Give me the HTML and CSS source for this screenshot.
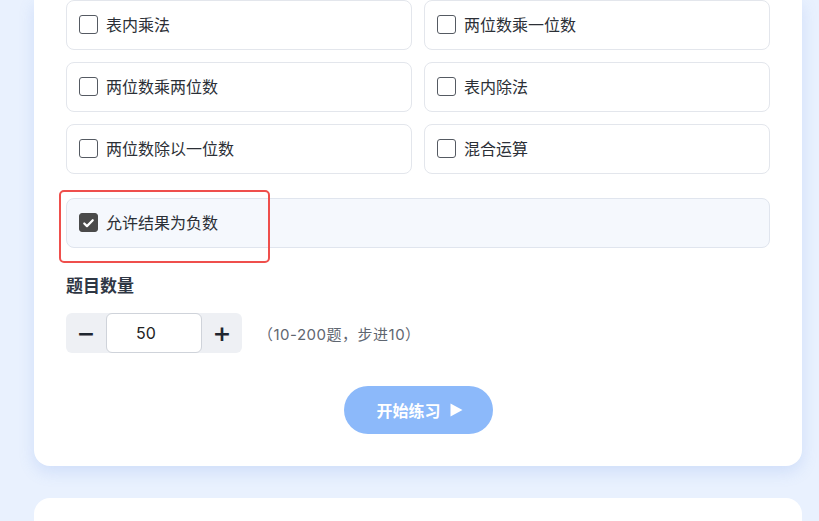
FILE: index.html
```html
<!DOCTYPE html>
<html lang="zh">
<head>
<meta charset="utf-8">
<link rel="stylesheet" href="styles.css">
</head>
<body>
<div class="page">
  <section class="card">
    <div class="grid">
      <label class="opt"><span class="box"></span><span class="txt">表内乘法</span></label>
      <label class="opt"><span class="box"></span><span class="txt">两位数乘一位数</span></label>
      <label class="opt"><span class="box"></span><span class="txt">两位数乘两位数</span></label>
      <label class="opt"><span class="box"></span><span class="txt">表内除法</span></label>
      <label class="opt"><span class="box"></span><span class="txt">两位数除以一位数</span></label>
      <label class="opt"><span class="box"></span><span class="txt">混合运算</span></label>
    </div>
    <div class="neg-wrap">
      <label class="opt neg"><span class="box checked"><svg viewBox="0 0 20 20" width="20" height="20"><path d="M5 10.5l3.2 3.2L15 6.8" fill="none" stroke="#fff" stroke-width="2.6" stroke-linecap="round" stroke-linejoin="round"/></svg></span><span class="txt">允许结果为负数</span></label>
      <div class="highlight"></div>
    </div>
    <h3 class="label">题目数量</h3>
    <div class="count-row">
      <div class="stepper">
        <button class="step">−</button>
        <div class="num">50</div>
        <button class="step">+</button>
      </div>
      <span class="hint">（10-200题，步进10）</span>
    </div>
    <div class="actions">
      <button class="start"><span>开始练习</span><svg class="tri" viewBox="0 0 13 14" width="13" height="14"><path d="M0.5 0.5L12.5 7L0.5 13.5Z" fill="#fff"/></svg></button>
    </div>
  </section>
  <section class="card next"></section>
</div>
</body>
</html>
```
FILE: styles.css
```css
* { box-sizing: border-box; }
html, body { margin: 0; padding: 0; }
body {
  background: #e9f1fe;
  font-family: "Inter", "Noto Sans CJK SC", sans-serif;
  color: #1f2937;
  height: 521px;
  overflow: hidden;
}
.page {
  padding: 0 17px 0 34px;
}
.card {
  background: #fff;
  border-radius: 0 0 16px 16px;
  padding: 0 32px 32px;
  box-shadow: 0 6px 16px rgba(96, 140, 230, 0.18);
}
.card.next {
  margin-top: 32px;
  border-radius: 16px 16px 0 0;
  height: 23px;
  box-shadow: none;
}
.grid {
  display: grid;
  grid-template-columns: 1fr 1fr;
  gap: 12px 12px;
}
.opt {
  display: flex;
  align-items: center;
  height: 50px;
  padding: 0 12px 1px;
  border: 1px solid #e3e6ec;
  border-radius: 8px;
  font-size: 16px;
  color: #2b2f36;
  gap: 8px;
  background: #fff;
}
.txt {
  position: relative;
  top: -1px;
}
.box {
  width: 19px;
  height: 19px;
  border: 1.5px solid #555a62;
  border-radius: 3px;
  display: inline-flex;
  align-items: center;
  justify-content: center;
  flex: none;
}
.box.checked {
  background: #4a4a4a;
  border-color: #4a4a4a;
}
.neg-wrap {
  position: relative;
  margin-top: 24px;
}
.opt.neg {
  background: #f5f8fd;
  border-color: #e0e5ee;
}
.highlight {
  position: absolute;
  left: -7px;
  top: -8px;
  width: 211px;
  height: 73px;
  border: 2px solid #ef4f4c;
  border-radius: 5px;
  pointer-events: none;
}
.label {
  margin: 26px 0 0;
  font-size: 17px;
  font-weight: 700;
  color: #2f3744;
  line-height: 24px;
}
.count-row {
  display: flex;
  align-items: center;
  margin-top: 15px;
  gap: 16px;
}
.stepper {
  display: flex;
  background: #eef0f4;
  border-radius: 6px;
  height: 40px;
}
.step {
  width: 40px;
  height: 40px;
  border: 0;
  background: transparent;
  font-size: 22px;
  font-weight: 700;
  color: #1f2630;
  font-family: "DejaVu Sans", sans-serif;
  padding: 0;
}
.num {
  width: 96px;
  height: 40px;
  background: #fff;
  border: 1px solid #cfd3da;
  border-radius: 6px;
  display: flex;
  align-items: center;
  justify-content: center;
  padding-right: 16px;
  font-size: 16px;
  color: #222;
}
.hint {
  font-size: 15px;
  letter-spacing: 0.5px;
  color: #5f6670;
}
.actions {
  display: flex;
  justify-content: center;
  margin-top: 33px;
}
.start {
  width: 149px;
  height: 48px;
  border: 0;
  border-radius: 24px;
  background: #8cb9fa;
  color: #fff;
  font-size: 16px;
  font-weight: 700;
  font-family: "Inter", "Noto Sans CJK SC", sans-serif;
  margin-left: 1px;
  display: flex;
  align-items: center;
  justify-content: center;
  gap: 9px;
  padding: 0 0 0 2px;
}
.tri {
  flex: none;
}
```
